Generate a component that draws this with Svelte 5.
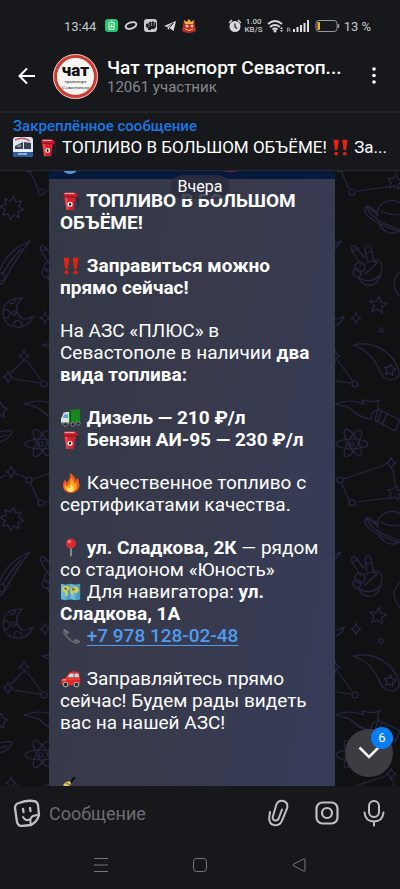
<script>
    let message = '';
    const unread = 6;

    // Points of a star polygon around (cx, cy)
    function star(cx, cy, outer, inner, tips) {
        let points = [];
        for (let i = 0; i < tips * 2; i++) {
            const r = i % 2 ? inner : outer;
            const angle = (i / tips) * Math.PI - Math.PI / 2.2;
            points.push(`${(cx + r * Math.cos(angle)).toFixed(1)},${(cy + r * Math.sin(angle)).toFixed(1)}`);
        }
        return points.join(' ');
    }

    const sparkles = [
        {x: 80, y: 152}, {x: 11, y: 161}, {x: 45, y: 318}, {x: 24, y: 356}, {x: 8, y: 377}
    ];
    const nodes = [
        {x: 29, y: 169, r: 3}, {x: 41, y: 192, r: 3}, {x: 70, y: 330, r: 2}, {x: 44, y: 384, r: 3}
    ];
</script>

{#snippet fuel()}
    <svg class="emoji" viewBox="0 0 22 22" aria-hidden="true">
        <path d="M17 6q3 2 2 5v6" fill="none" stroke="#24252c" stroke-width="1.200" />
        <path d="M4 7h12l-2 14H6z" fill="#d5202e" />
        <path d="M4 7h3l1 14H6z" fill="#ef4a50" />
        <path d="M3 2h13l3 3-2 2H3z" fill="#c91b2b" />
        <path d="M4 2h11v1.500H4z" fill="#eda0a0" />
        <path d="M3 6.500h13" stroke="#8d1220" />
        <circle cx="10" cy="14.500" r="2.800" fill="#f4f1ee" />
        <path d="M10 12.500q2.500 3 0 3.800-2.500-.8 0-3.800" fill="#18181c" />
    </svg>
{/snippet}

{#snippet bang()}
    <svg class="emoji" viewBox="0 0 22 22" aria-hidden="true">
        <path d="M3 2h6L7.500 14h-3zM13 2h6l-1.500 12h-3z" fill="#e8200f" />
        <circle cx="6" cy="18" r="2.200" fill="#e8200f" />
        <circle cx="16" cy="18" r="2.200" fill="#e8200f" />
    </svg>
{/snippet}

<div class="screen">
    <div class="status">
        <span class="time">13:44</span>
        <svg class="tray" width="96" height="16" viewBox="0 0 96 16" aria-hidden="true">
            <rect x="0" y="1" width="13" height="13" rx="3" fill="#2cc56f" />
            <path d="M4 4.500h5v7H4zM5.500 3h2" fill="none" stroke="#d9ffe8" />
            <path d="M7 6l-1.500 2.500h2L6 10.500" fill="none" stroke="#fff" stroke-width=".8" />
            <ellipse cx="26" cy="7.500" rx="5.500" ry="3" transform="rotate(-18 26 7.500)" fill="none" stroke="#d2d3d6" stroke-width="2" />
            <rect x="39" y="1" width="13" height="13" rx="3" fill="#c9cacf" />
            <path d="M41 6l3-1v-1h2v1l1-1.500h2V5l2-1v5l-2 2h-3v1h-3v-2l-2-1z" fill="#191b20" />
            <path d="M44 5v4M46.500 5v3M49 5v3" stroke="#c9cacf" stroke-width=".6" />
            <path d="M59 8l12-5-2.500 10-4-3-1.500 2-.5-3z" fill="#e0e1e5" />
            <path d="M62.500 9l6-4-4 5" fill="none" stroke="#191b20" stroke-width=".8" />
            <path d="M78 7l1-5 3 2 2-3 2 3 3-2 1 5 1 6q-7 4-14 0z" fill="#b92d25" />
            <path d="M79 2l3 2 2-3 2 3 3-2-1 4h-8z" fill="#efb13e" />
            <circle cx="82" cy="8" r="1.500" fill="#f2cdb0" />
            <circle cx="87" cy="8" r="1.500" fill="#f2cdb0" />
            <path d="M80 11q4 3 8 0" fill="none" stroke="#f0c084" />
        </svg>
        <div class="signals">
            <svg width="12" height="14" viewBox="0 0 12 14" aria-hidden="true">
                <circle cx="6" cy="7.500" r="5.500" fill="#d8d9dc" />
                <path d="M0 4l3-3M12 4L9 1" stroke="#d8d9dc" stroke-width="1.500" />
                <path d="M6 4.500v3.500l2 1.500" fill="none" stroke="#191b20" stroke-width="1.200" />
            </svg>
            <span class="speed"><b>1.00</b><b>KB/S</b></span>
            <svg width="44" height="16" viewBox="0 0 44 16" aria-hidden="true">
                <path d="M1 6q7-6 14 0M3 9q5-4 10 0M5.500 11.500q2.500-2 5 0" fill="none" stroke="#d8d9dc" stroke-width="1.700" />
                <circle cx="8" cy="13" r="1.500" fill="#d8d9dc" />
                <path d="M13 11l1.500-2 1.500 2zM13 12l1.500 2 1.500-2z" fill="#d8d9dc" />
                <path d="M20.500 14v-4h2q1.500 1 0 2h-2m1.500 0l1.500 2" fill="none" stroke="#aeb0b5" stroke-width=".8" />
                <path d="M27 14v-3M30.500 14V9M34 14V7M37.500 14V5M41 14V2" stroke="#e0e1e4" stroke-width="2" />
            </svg>
            <svg class="battery" width="25" height="14" viewBox="0 0 25 14" aria-hidden="true">
                <rect x="1" y="1.500" width="21" height="11" rx="3" fill="none" stroke="#96979c" />
                <path d="M23.500 5v4" stroke="#96979c" stroke-width="1.500" />
                <rect x="2.500" y="3" width="2.500" height="8" rx="1" fill="#f3b12b" />
            </svg>
            <span class="percent">13 %</span>
        </div>
    </div>

    <header>
        <button class="back" aria-label="Назад">
            <svg width="20" height="20" viewBox="0 0 20 20"><path d="M18 10H3M10 2.500L2.500 10l7.500 7.500" fill="none" stroke="#fff" stroke-width="2" /></svg>
        </button>
        <div class="avatar">
            <strong>чат</strong>
            <span>транспорт</span>
            <span>Севастополя</span>
        </div>
        <div class="chat-name">
            <h1>Чат транспорт Севастоп...</h1>
            <p>12061 участник</p>
        </div>
        <button class="more" aria-label="Меню">
            <svg width="6" height="20" viewBox="0 0 6 20" fill="#fff"><circle cx="3" cy="3" r="1.800" /><circle cx="3" cy="9.500" r="1.800" /><circle cx="3" cy="16" r="1.800" /></svg>
        </button>
    </header>

    <section class="pinned">
        <h2>Закреплённое сообщение</h2>
        <p>
            <svg class="thumb" viewBox="0 0 20 20" aria-hidden="true">
                <rect width="20" height="20" rx="3" fill="#dce7f2" />
                <path d="M2 3q8-4 15 1" fill="none" stroke="#ca5060" stroke-width="1.500" />
                <path d="M2 9l8-4v7H2zM11 5l7 1v6h-7z" fill="#39424f" />
                <path d="M4 9l4-2v3H4z" fill="#8c9298" />
                <path d="M0 15h20v2q0 3-3 3H3q-3 0-3-3z" fill="#2e5c9b" />
                <path d="M3 14h14M5 17h9" stroke="#fff" />
            </svg>
            {@render fuel()} ТОПЛИВО В БОЛЬШОМ ОБЪЁМЕ! {@render bang()} За...
        </p>
    </section>

    <main>
        <svg class="wallpaper" width="100%" height="100%" aria-hidden="true">
            <defs>
                <pattern id="space" x="0" y="-25" width="311" height="311" patternUnits="userSpaceOnUse" viewBox="0 146 311 311">
                    <g fill="none" stroke="#262745" stroke-width="1.200" stroke-linejoin="round" stroke-linecap="round">
                        {#each sparkles as {x, y}}
                            <path d="M{x} {y - 6}q1 5 5 6q-4 1-5 6q-1-5-5-6q4-1 5-6z" />
                        {/each}
                        {#each nodes as {x, y, r}}
                            <circle cx={x} cy={y} {r} />
                        {/each}
                        <path d="M0 167l6-3M16 163l10 4M33 168l41-14M31 173l7 16M46 191l31-4M82 158l2 14" />
                        <polygon points={star(84, 182, 8, 4, 5)} />
                        <polygon points={star(12, 208, 12, 7, 8)} />
                        <polygon points={star(67, 305, 9, 4, 5)} />
                        <polygon points={star(0, 410, 8, 4, 5)} />
                        <!-- Saturn -->
                        <path d="M66 216a14 14 0 0 1 29-2M68 223a14 14 0 0 0 22 7M70 211q8 5 20 3" />
                        <path d="M67 215q-15-12-11-7q6 13 31 21q14 4 10-4" />
                        <path d="M66 213q-9-10-12-5q-2 8 17 17q20 10 27 5" />
                        <!-- Comets -->
                        <path d="M30 241Q8 250 0 270M30 241Q18 255 4 281q-2 4-4 3M21 249q-12 13-18 24" />
                        <circle cx="1" cy="277" r="4" />
                        <path d="M42 345q24-5 40 14q11 16 2 20q-11 4-16-10q-8-18-26-24z" />
                        <polygon points={star(79, 370, 6, 3, 5)} />
                        <!-- Hand -->
                        <path d="M50 265l-9-14q-2-6 3-5l9 11M56 260l-2-12q3-6 6 0l3 14" />
                        <path d="M63 260q8 0 8 7q-1 14-9 18q-10 2-15-8M48 278q12 7 22-4M42 251l5-3M54 253l6-1" />
                        <circle cx="49" cy="267" r="5" />
                        <circle cx="46" cy="273" r="4" />
                        <path d="M54 274l12-11q-6-4-10 0M96 270q-12 1-13 14q2 12 12 17" />
                        <!-- Moon -->
                        <path d="M22 298Q3 298 3 314q2 14 18 13q10-3 12-11q-9 6-14 0q-6-9 3-18z" />
                        <path d="M15 299q0 6-5 4M4 310q6-1 6 4q-1 5-6 4M14 325q0-6 5-4t2 6" />
                        <circle cx="14" cy="313" r="2" />
                        <path d="M22 362l-11 11M27 361l14 19M13 379l27 4" />
                        <!-- Torch -->
                        <path d="M24 404q15-6 29 0l-2-4q11 3 18 0q-4 5-1 10q-8 0-8 9q-12-1-20-10q-5-3-16-5z" />
                        <path d="M67 409l22 11-5 11-20-11zM71 411l-5 11M76 414l-5 11M90 420l13 6" />
                        <path d="M0 432q13-3 12 1q-3 6-12 9M0 437l7-2" />
                        <!-- Atom -->
                        <ellipse cx="41" cy="444" rx="16" ry="5" />
                        <ellipse cx="41" cy="442" rx="15" ry="5" transform="rotate(60 41 443)" />
                        <ellipse cx="41" cy="442" rx="15" ry="5" transform="rotate(120 41 443)" />
                        <circle cx="41" cy="444" r="2" />
                    </g>
                </pattern>
            </defs>
            <rect width="100%" height="100%" fill="url(#space)" />
        </svg>

        <span class="date">Вчера</span>

        <article>
            <svg class="photo" width="100%" height="8" aria-hidden="true">
                <rect width="100%" height="8" fill="#07183d" />
                <ellipse cx="21" cy="-2" rx="7" ry="5" fill="#4d9ed4" />
                <ellipse cx="182" cy="0" rx="7" ry="1" fill="#6b2450" />
            </svg>
            <div class="text">
                <p><b>{@render fuel()} ТОПЛИВО В БОЛЬШОМ ОБЪЁМЕ!</b></p>
                <p><b>{@render bang()} Заправиться можно<br />прямо сейчас!</b></p>
                <p>На АЗС «ПЛЮС» в<br />Севастополе в наличии <b>два вида топлива:</b></p>
                <p>
                    <svg class="emoji" viewBox="0 0 22 22" aria-hidden="true">
                        <path d="M9 2l12-1v15H9z" fill="#16851d" />
                        <path d="M9 2l2 1v13H9z" fill="#0b5310" />
                        <path d="M13 3v12M17 3v12" stroke="#27992d" stroke-width=".7" />
                        <path d="M1 10l2-5 6-1v13H0v-6z" fill="#d8e5e4" />
                        <path d="M2 10l2-3h4v4H2z" fill="#5babc3" />
                        <path d="M0 16h21v2H0z" fill="#555b5e" />
                        <g fill="#17191b" stroke="#8b9293"><circle cx="5" cy="18" r="2" /><circle cx="13" cy="18" r="2" /><circle cx="19" cy="17" r="2" /></g>
                    </svg>
                    <b>Дизель — 210 ₽/л</b><br />
                    {@render fuel()} <b>Бензин АИ-95 — 230 ₽/л</b>
                </p>
                <p>
                    <svg class="emoji" viewBox="0 0 22 22" aria-hidden="true">
                        <path d="M10 0q6 4 6 9l2-4q4 9 1 13-3 4-8 4-8 0-9-8 0-4 3-7l1 4Q11 6 10 0z" fill="#f45b16" />
                        <path d="M11 5q4 5 3 8l3-3q2 10-6 11-8-1-7-8l3 2q4-3 4-10z" fill="#ffae24" />
                        <path d="M11 12q5 7 1 9-7 0-5-6l2 2q2-2 2-5z" fill="#ffe477" />
                    </svg>
                    Качественное топливо с<br />сертификатами качества.
                </p>
                <p>
                    <svg class="emoji" viewBox="0 0 22 22" aria-hidden="true">
                        <path d="M11 10v10" stroke="#a6acb1" stroke-width="1.500" />
                        <circle cx="11" cy="6" r="5.500" fill="#d92b2c" />
                        <circle cx="9" cy="4" r="1.800" fill="#fa8580" />
                    </svg>
                    <b>ул. Сладкова, 2К</b> — рядом<br />со стадионом «Юность»<br />
                    <svg class="emoji" viewBox="0 0 22 22" aria-hidden="true">
                        <path d="M0 2l5 1 5-1 6 1 5-1v17l-5 1-6-1-5 1-5-1z" fill="#64b9dc" />
                        <path d="M5 3l5-1v17l-5 1zM16 3l5-1v17l-5 1z" fill="#489dc5" />
                        <path d="M2 5l6-1 2 3-3 3 1 3-2 4-2-6-3-2zM11 6l7-1 2 4-3 4-3-3-1 6-3-5z" fill="#d5cb59" />
                        <path d="M3 6l4 1-2 2zM12 6l4 2-3 2z" fill="#487636" />
                    </svg>
                    Для навигатора: <b>ул. Сладкова, 1А</b><br />
                    <svg class="emoji" viewBox="0 0 22 22" aria-hidden="true">
                        <path d="M4 3Q1 5 2 8q5 9 15 12 4 0 4-3l-5-3-3 2q-5-4-6-7l2-2z" fill="#4a4d55" />
                        <path d="M4 3l5 4-2 2-5-4zM16 14l5 3-2 2-5-3z" fill="#6c6f77" />
                        <path d="M3 7q5 9 14 12" fill="none" stroke="#80838a" stroke-width=".8" />
                    </svg>
                    <a href="tel:+79781280248">+7 978 128-02-48</a>
                </p>
                <p>
                    <svg class="emoji" viewBox="0 0 22 22" aria-hidden="true">
                        <path d="M0 12l5-3 4-5q6-3 11 0l1 6v6l-2 2H2l-2-2z" fill="#df2725" />
                        <path d="M7 9l3-4h4v4zM15 5h4l1 4h-5z" fill="#b7e0ed" />
                        <path d="M1 13h4l1-2-4 0z" fill="#ff8c78" />
                        <path d="M6 11h15" stroke="#f65747" />
                        <g fill="#222428" stroke="#a4a7aa" stroke-width="1.200"><circle cx="5" cy="17" r="2.500" /><circle cx="17" cy="17" r="2.500" /></g>
                    </svg>
                    Заправляйтесь прямо<br />сейчас! Будем рады видеть<br />вас на нашей АЗС!
                </p>
                <svg class="wand" width="22" height="22" viewBox="0 0 22 22" aria-hidden="true">
                    <path d="M14 0L8 7" stroke="#0d0e12" stroke-width="2" />
                    <path d="M2 8l3-3 4-1 1 3-4 5z" fill="#e4c861" />
                    <path d="M5 6l4 2" stroke="#685728" />
                </svg>
            </div>
        </article>

        <button class="down" aria-label="Вниз">
            <svg width="22" height="14" viewBox="0 0 22 14"><path d="M1.500 1.500L11 11l9.500-9.500" fill="none" stroke="#fff" stroke-width="2.500" /></svg>
            <span>{unread}</span>
        </button>
    </main>

    <form on:submit|preventDefault>
        <button type="button" aria-label="Стикеры">
            <svg width="28" height="28" viewBox="0 0 28 28" fill="none" stroke="#bfc0c3" stroke-width="2.300" stroke-linecap="round" stroke-linejoin="round">
                <path d="M6 4q8-3 14-2 4 0 5 4l1 10q-2 7-8 10l-9 1q-4 0-5-4L2 9q0-4 4-5z" />
                <path d="M18 26q-2-7 2-9 3-1 6-1M10 18q3 5 7 2" stroke-width="2" />
                <path d="M10 10l.5 3M17 9l.5 3" />
            </svg>
        </button>
        <input type="text" placeholder="Сообщение" aria-label="Сообщение" bind:value={message} />
        <button type="button" aria-label="Прикрепить">
            <svg width="22" height="28" viewBox="0 0 22 28" fill="none" stroke="#bfc0c3" stroke-width="2" stroke-linecap="round">
                <path d="M2 13l-.8 6q-.2 6 5 7 6 1 8-5l5-12q1-6-4-7-5-1-7 4L5 17q-1 4 2 4.500 3 .5 4-3l3-8" />
            </svg>
        </button>
        <button class="camera" type="button" aria-label="Камера">
            <svg width="24" height="24" viewBox="0 0 24 24" fill="none" stroke="#bfc0c3" stroke-width="2.200">
                <rect x="1.500" y="1.500" width="21" height="21" rx="6" />
                <circle cx="12" cy="12" r="5" />
            </svg>
        </button>
        <button type="button" aria-label="Голосовое сообщение">
            <svg width="22" height="28" viewBox="0 0 22 28" fill="none" stroke="#bfc0c3" stroke-width="2" stroke-linecap="round">
                <rect x="6" y="2" width="10" height="16" rx="5" />
                <path d="M1.500 13.500q1 9 9.500 9t9.500-9M11 22.500v4" />
            </svg>
        </button>
    </form>

    <nav>
        <button aria-label="Недавние"><svg width="14" height="14" viewBox="0 0 14 14"><path d="M0 .5h14M0 7h14M0 13.500h14" /></svg></button>
        <button aria-label="Домой"><svg width="14" height="14" viewBox="0 0 14 14"><rect x=".5" y=".5" width="13" height="13" rx="3" /></svg></button>
        <button aria-label="Назад"><svg width="14" height="14" viewBox="0 0 14 14"><path d="M12 .8q1-.4 1 1v10.400q0 1.400-1 1L1.500 7.800q-1-.8 0-1.600z" /></svg></button>
    </nav>
</div>

<style>
    :global(body) {
        background: #17181c;
    }

    .screen {
        display: flex;
        flex-direction: column;
        height: 100vh;
        background: #17181c;
        color: #fff;
        font-family: Roboto, "Noto Sans", sans-serif;
    }

    h1, h2, p {
        margin: 0;
    }

    svg {
        flex-shrink: 0;
    }

    button {
        display: flex;
        align-items: center;
        justify-content: center;
        padding: 0;
        border: 0;
        background: none;
        cursor: pointer;
    }

    .status {
        display: flex;
        align-items: center;
        height: 52px;
        padding: 0 29px 0 64px;
        box-sizing: border-box;
        color: #c6c7ca;
    }

    .time {
        font-size: 13px;
        margin-right: 9px;
    }

    .signals {
        display: flex;
        align-items: center;
        margin-left: auto;
        gap: 4px;
    }

    .speed {
        display: flex;
        flex-direction: column;
        align-items: center;
        font-size: 8px;
        line-height: 8px;
    }

    .speed b {
        font-weight: 500;
    }

    .percent {
        font-size: 13px;
    }

    header {
        display: flex;
        align-items: center;
        height: 48px;
        padding: 0 16px 11px 17px;
    }

    .back {
        width: 20px;
        margin-right: 16px;
    }

    .more {
        width: 20px;
    }

    .avatar {
        display: flex;
        flex-direction: column;
        align-items: center;
        justify-content: center;
        flex-shrink: 0;
        width: 45px;
        height: 45px;
        box-sizing: border-box;
        border: 4px solid #cf3b31;
        border-radius: 50%;
        outline: 1px solid #d6cfcd;
        outline-offset: -1px;
        background: #f5f5f3;
        color: #111;
    }

    .avatar strong {
        font-size: 17px;
        line-height: 18px;
        font-weight: 900;
    }

    .avatar span {
        font-family: "Liberation Serif", serif;
        font-size: 5px;
        line-height: 6px;
    }

    .chat-name {
        flex: 1;
        min-width: 0;
        margin-left: 9px;
        white-space: nowrap;
    }

    h1 {
        font-size: 19px;
        line-height: 22px;
        font-weight: 500;
    }

    .chat-name p {
        color: #85878c;
        font-size: 15px;
        line-height: 16px;
    }

    .pinned {
        height: 60px;
        padding: 5px 13px 0;
        box-sizing: border-box;
        border-top: 2px solid #222328;
        border-bottom: 1px solid #26282d;
        white-space: nowrap;
        overflow: hidden;
    }

    h2 {
        color: #1778e3;
        font-size: 15px;
        line-height: 17px;
        font-weight: 500;
    }

    .pinned p {
        font-size: 17px;
        line-height: 24px;
    }

    .thumb {
        width: 20px;
        height: 20px;
        margin-right: 2px;
        vertical-align: -4px;
    }

    .emoji {
        width: 22px;
        height: 20px;
        vertical-align: -4px;
    }

    .pinned .emoji {
        width: 19px;
        height: 19px;
    }

    main {
        position: relative;
        flex: 1;
        min-height: 0;
        overflow: hidden;
        background: #101112;
    }

    .wallpaper {
        position: absolute;
        inset: 0;
    }

    .date {
        position: absolute;
        z-index: 1;
        top: 4px;
        left: 50%;
        transform: translateX(-50%);
        padding: 0 7px;
        border-radius: 12px;
        background: rgba(43, 46, 62, 0.85);
        font-size: 16px;
        line-height: 24px;
    }

    article {
        position: relative;
        min-height: 100%;
        margin: 0 65px 0 49px;
        background: linear-gradient(100deg, #343846 0%, #383a4c 50%, #363c5a 100%);
    }

    .photo {
        display: block;
    }

    .text {
        display: flex;
        flex-direction: column;
        gap: 21px;
        padding: 11px 11px 0;
        font-size: 19px;
        line-height: 22px;
    }

    b {
        font-weight: 700;
    }

    .text a {
        color: #4f9cf0;
        font-weight: 500;
        text-decoration: underline;
        text-underline-offset: 3px;
    }

    .wand {
        margin: 22px 0 0 1px;
    }

    .down {
        position: absolute;
        right: 7px;
        bottom: 9px;
        width: 48px;
        height: 48px;
        border-radius: 50%;
        background: #3b3d41;
    }

    .down span {
        position: absolute;
        top: -2px;
        right: 0;
        width: 22px;
        border-radius: 11px;
        background: #087cf5;
        color: #fff;
        font-family: Roboto, sans-serif;
        font-size: 13px;
        line-height: 22px;
    }

    form {
        display: flex;
        align-items: center;
        height: 54px;
        padding: 0 15px 0 13px;
    }

    input {
        flex: 1;
        min-width: 0;
        margin: 0 8px;
        padding: 0;
        border: 0;
        outline: 0;
        background: none;
        color: #fff;
        font-family: Roboto, sans-serif;
        font-size: 18px;
    }

    input::placeholder {
        color: #6c6d71;
        opacity: 1;
    }

    .camera {
        margin: 0 24px 0 25px;
    }

    nav {
        display: flex;
        justify-content: space-around;
        height: 49px;
        padding: 0 51px;
    }

    nav svg {
        fill: none;
        stroke: #77787b;
    }
</style>
